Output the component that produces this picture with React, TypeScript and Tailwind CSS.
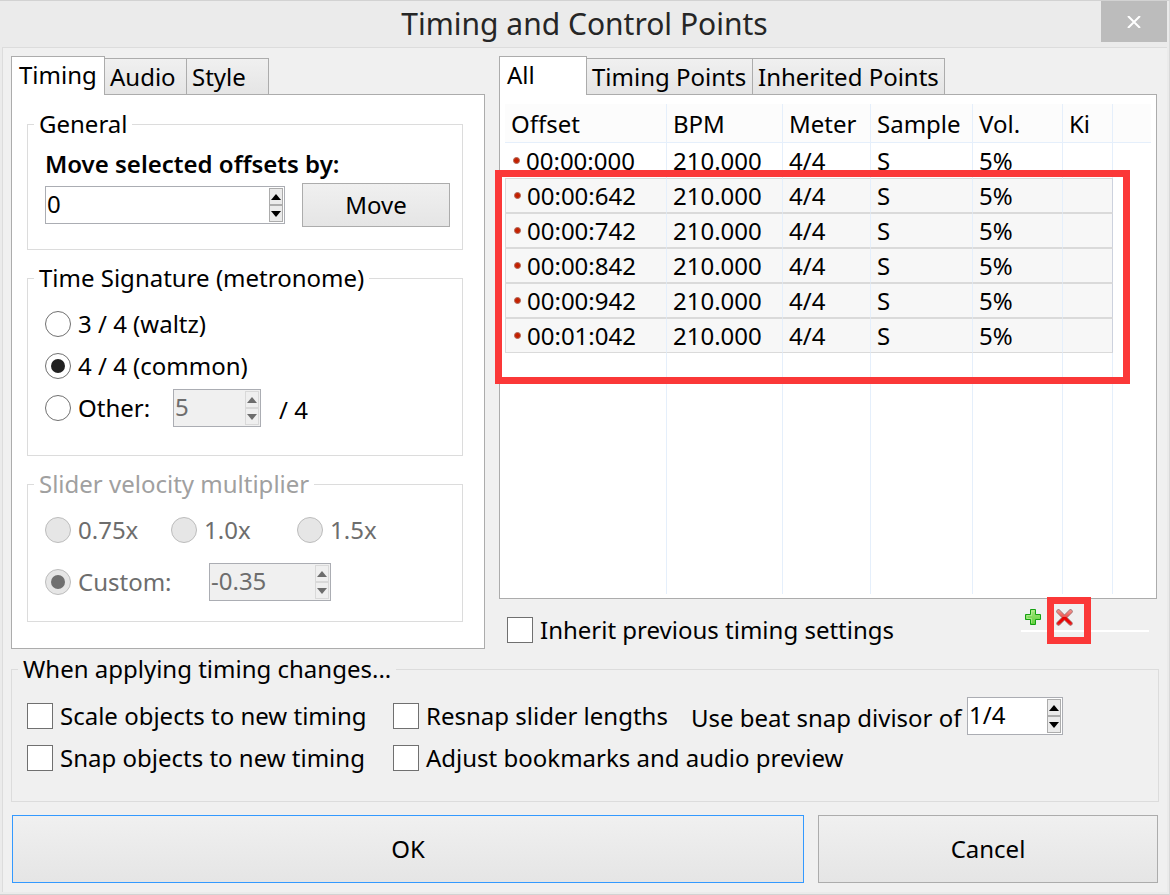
import { useState } from "react";
import type { ReactNode } from "react";
import clsx from "clsx";

type Point = {
  offset: string;
  bpm: string;
  meter: string;
  sample: string;
  volume: string;
  selected: boolean;
};

const offsets = ["00:00:000", "00:00:642", "00:00:742", "00:00:842", "00:00:942", "00:01:042"];

const points: Point[] = offsets.map((offset, i) => ({
  offset,
  bpm: "210.000",
  meter: "4/4",
  sample: "S",
  volume: "5%",
  selected: i > 0,
}));

function Tabs({ names, widths }: { names: string[]; widths: string[] }) {
  const [active, setActive] = useState(0);
  return (
    <div role="tablist" className="relative z-10 -mb-px flex h-[39px] items-end">
      {names.map((name, i) => (
        <button
          key={name}
          role="tab"
          aria-selected={i === active}
          onClick={() => setActive(i)}
          className={clsx(
            "border border-[#acacac] text-left whitespace-nowrap",
            widths[i],
            i === active
              ? "h-[39px] border-b-0 bg-white pb-0.5 pl-[7px]"
              : "-ml-px h-[37px] bg-linear-to-b from-[#f0f0f0] to-[#e5e5e5] pl-[5px]"
          )}
        >
          {name}
        </button>
      ))}
    </div>
  );
}

function Group({
  title,
  className,
  children,
}: {
  title: string;
  className?: string;
  children: ReactNode;
}) {
  return (
    <fieldset className={clsx("min-w-0 border border-[#dcdcdc]", className)}>
      <legend className="ml-[6px] px-[5px] leading-6">{title}</legend>
      {children}
    </fieldset>
  );
}

function Spinner({
  label,
  value,
  className,
  disabled,
}: {
  label: string;
  value: string;
  className: string;
  disabled?: boolean;
}) {
  const button = clsx(
    "flex flex-1 items-center justify-center border",
    disabled ? "border-[#d9d9d9] bg-[#efefef]" : "border-[#acacac] bg-[#ebebeb]"
  );
  return (
    <div
      className={clsx(
        "flex h-[38px] shrink-0 border border-[#abadb3] p-px",
        className,
        disabled ? "bg-[#f0f0f0] text-[#6d6d6d]" : "bg-white text-black"
      )}
    >
      <input
        aria-label={label}
        defaultValue={value}
        disabled={disabled}
        className="min-w-0 flex-1 bg-transparent pb-0.5 outline-none"
      />
      <div className="flex w-[14px] flex-col">
        <button aria-label="Increase" disabled={disabled} className={button}>
          <svg width="10" height="6" viewBox="0 0 10 6" fill="currentColor">
            <path d="M0 6 5 0l5 6z" />
          </svg>
        </button>
        <button aria-label="Decrease" disabled={disabled} className={button}>
          <svg width="10" height="6" viewBox="0 0 10 6" fill="currentColor">
            <path d="M0 0h10L5 6z" />
          </svg>
        </button>
      </div>
    </div>
  );
}

function Radio({
  label,
  name,
  checked,
  disabled,
  className,
}: {
  label: string;
  name: string;
  checked?: boolean;
  disabled?: boolean;
  className?: string;
}) {
  return (
    <label className={clsx("flex items-center gap-[7px] whitespace-nowrap", className)}>
      <input
        type="radio"
        name={name}
        defaultChecked={checked}
        disabled={disabled}
        className="grid size-[26px] shrink-0 appearance-none place-items-center rounded-full border border-[#707070] bg-white before:size-[14px] before:rounded-full checked:before:bg-[#212121] disabled:border-[#bcbcbc] disabled:bg-[#e6e6e6] disabled:checked:before:bg-[#707070]"
      />
      {label}
    </label>
  );
}

function Checkbox({ label, className }: { label: string; className?: string }) {
  return (
    <label className={clsx("flex items-center gap-[7px] whitespace-nowrap", className)}>
      <input
        type="checkbox"
        className="size-[26px] shrink-0 appearance-none border border-[#707070] bg-white checked:bg-[#707070]"
      />
      {label}
    </label>
  );
}

function AddIcon() {
  return (
    <svg width="16" height="16" viewBox="0 0 16 16">
      <defs>
        <linearGradient id="add" x1="0" y1="0" x2="0" y2="1">
          <stop offset="0" stopColor="#a5e67c" />
          <stop offset="1" stopColor="#5fd03b" />
        </linearGradient>
      </defs>
      <path
        d="M5.5.5h5v5h5v5h-5v5h-5v-5h-5v-5h5z"
        fill="url(#add)"
        stroke="#15a012"
        strokeLinejoin="round"
      />
      <path d="M6.5 14V9.500H2v-3h4.500V2h3" fill="none" stroke="#c2f0a4" strokeOpacity=".6" />
    </svg>
  );
}

function DeleteIcon() {
  return (
    <svg width="17" height="17" viewBox="0 0 17 17" strokeLinecap="round">
      <defs>
        <linearGradient id="delete" x1="0" y1="0" x2="0" y2="17" gradientUnits="userSpaceOnUse">
          <stop offset="0" stopColor="#f2a09a" />
          <stop offset=".46" stopColor="#ee5450" />
          <stop offset=".5" stopColor="#e60000" />
          <stop offset=".8" stopColor="#ee0a0a" />
          <stop offset="1" stopColor="#e05050" />
        </linearGradient>
      </defs>
      <path d="M2.500 2.500l12 12M14.500 2.500l-12 12" stroke="#a87878" strokeWidth="4.500" />
      <path d="M2.500 2.500l12 12M14.500 2.500l-12 12" stroke="url(#delete)" strokeWidth="3" />
    </svg>
  );
}

function PointsTable() {
  const line = "border-r border-r-[#e5effb]";
  return (
    <table className="h-full w-full table-fixed border-separate border-spacing-0">
      <colgroup>
        <col className="w-[162px]" />
        <col className="w-[116px]" />
        <col className="w-[88px]" />
        <col className="w-[102px]" />
        <col className="w-[90px]" />
        <col className="w-[50px]" />
        <col />
      </colgroup>
      <thead>
        <tr className="h-[39px] bg-[#fcfcfc] text-left">
          {["Offset", "BPM", "Meter", "Sample", "Vol.", "Ki"].map((name) => (
            <th
              key={name}
              className={clsx("border-b border-b-[#e5effb] pt-0.5 pl-[6px] font-normal", line)}
            >
              {name}
            </th>
          ))}
          <td className="border-b border-b-[#e5effb]" />
        </tr>
      </thead>
      <tbody>
        {points.map((point) => {
          const row = point.selected && "border-y border-y-[#dadada] bg-[#f7f7f7]";
          const cell = clsx("pl-[6px]", line, row);
          return (
            <tr key={point.offset} className="h-[35px]">
              <td className={clsx(cell, point.selected && "border-l border-l-[#dadada]")}>
                <div className="flex items-center gap-[6px] pl-0.5">
                  <span className="size-[7px] rounded-full border border-[#b06a5a] bg-[#c42000]" />
                  {point.offset}
                </div>
              </td>
              <td className={cell}>{point.bpm}</td>
              <td className={cell}>{point.meter}</td>
              <td className={cell}>{point.sample}</td>
              <td className={cell}>{point.volume}</td>
              <td className={clsx(row, point.selected ? "border-r border-r-[#cdd2de]" : line)} />
              <td />
            </tr>
          );
        })}
        <tr>
          {[0, 1, 2, 3, 4, 5].map((i) => (
            <td key={i} className={line} />
          ))}
          <td />
        </tr>
      </tbody>
    </table>
  );
}

export default function App() {
  const bigButton =
    "h-[68px] border bg-linear-to-b from-[#f0f0f0] to-[#e5e5e5] text-center";
  return (
    <div className="flex min-h-screen flex-col border-t border-r border-b border-t-[#d2d2d2] border-r-[#d9d9d9] border-b-[#d2d2d2] bg-[#ebebeb] pr-[2px] pb-[2px] pl-[2px] font-['Noto_Sans','Liberation_Sans',sans-serif] text-[24px] leading-8 text-black">
      <header className="grid h-[46px] grid-cols-[1fr_auto_1fr] items-start">
        <h1 className="col-start-2 text-[30px] leading-[46px] text-[#262626]">
          Timing and Control Points
        </h1>
        <button
          aria-label="Close"
          className="flex h-[41px] w-[66px] items-center justify-center justify-self-end bg-[#bcbcbc] text-white"
        >
          <svg width="14" height="12" viewBox="0 0 14 12" stroke="currentColor" strokeWidth="2">
            <path d="M1 0l12 12M13 0 1 12" />
          </svg>
        </button>
      </header>

      <main className="flex-1 border-t border-l border-[#dcdcdc] bg-[#f0f0f0] px-2 pt-2 pb-2">
        <div className="grid grid-cols-[474fr_658fr] gap-[14px] pr-0.5">
          <section>
            <Tabs names={["Timing", "Audio", "Style"]} widths={["w-[94px]", "w-[83px]", "w-[83px]"]} />
            <div className="flex flex-col gap-4 border border-[#acacac] bg-white pt-[17px] pr-[21px] pb-[26px] pl-[15px]">
              <Group title="General" className="pb-[22px]">
                <div className="pt-4 pl-[17px] leading-6 font-semibold">
                  Move selected offsets by:
                </div>
                <div className="mt-[7px] flex items-center gap-[17px] pl-[17px]">
                  <Spinner label="Move selected offsets by" value="0" className="w-[240px]" />
                  <button className="h-[44px] w-[148px] border border-[#acacac] bg-linear-to-b from-[#f0f0f0] to-[#e5e5e5]">
                    Move
                  </button>
                </div>
              </Group>

              <Group title="Time Signature (metronome)" className="pb-[26px]">
                <div className="pt-[13px] pl-[17px]">
                  <Radio name="signature" label="3 / 4 (waltz)" className="h-[42px]" />
                  <Radio name="signature" label="4 / 4 (common)" checked className="h-[42px]" />
                  <div className="flex h-[42px] items-center">
                    <Radio name="signature" label="Other:" className="w-[128px]" />
                    <Spinner label="Beats per measure" value="5" disabled className="w-[88px]" />
                    <span className="pt-1 pl-[18px]">/ 4</span>
                  </div>
                </div>
              </Group>

              <Group title="Slider velocity multiplier" className="pb-[13px] text-[#a0a0a0]">
                <div className="pt-2 pl-[17px] text-[#6d6d6d]">
                  <div className="flex h-[52px] items-center">
                    <Radio name="velocity" label="0.75x" disabled className="w-[126px]" />
                    <Radio name="velocity" label="1.0x" disabled className="w-[126px]" />
                    <Radio name="velocity" label="1.5x" disabled />
                  </div>
                  <div className="flex h-[52px] items-center">
                    <Radio name="velocity" label="Custom:" checked disabled className="w-[164px]" />
                    <Spinner label="Custom velocity" value="-0.35" disabled className="w-[122px]" />
                  </div>
                </div>
              </Group>
            </div>
          </section>

          <section className="flex flex-col">
            <Tabs
              names={["All", "Timing Points", "Inherited Points"]}
              widths={["w-[88px]", "w-[167px]", "w-[193px]"]}
            />
            <div className="relative h-[505px] border border-[#acacac] bg-white pt-[9px] pr-[5px] pb-1 pl-[5px]">
              <PointsTable />
              <div className="pointer-events-none absolute top-[75px] -left-[5px] h-[214px] w-[635px] border-7 border-[#fb3838]" />
            </div>
            <div className="flex flex-1 items-start justify-between pr-2 pl-2">
              <Checkbox label="Inherit previous timing settings" className="pt-[15px]" />
              <div className="flex h-[33px] w-[128px] items-start gap-[15px] border-b-2 border-white pt-[10px] pl-1">
                <button aria-label="Add timing point">
                  <AddIcon />
                </button>
                <button aria-label="Delete timing point" className="relative">
                  <DeleteIcon />
                  <span className="pointer-events-none absolute -top-3 -left-[9px] h-[47px] w-[44px] border-7 border-[#fb3838]" />
                </button>
              </div>
            </div>
          </section>
        </div>

        <Group title="When applying timing changes..." className="mt-2 pb-[22px]">
          <div className="grid grid-cols-[366px_298px_1fr] pt-[14px] pl-[15px]">
            <Checkbox label="Scale objects to new timing" className="h-[42px]" />
            <Checkbox label="Resnap slider lengths" className="h-[42px]" />
            <div className="flex h-[42px] items-center whitespace-nowrap">
              <span className="w-[276px] pt-1">Use beat snap divisor of</span>
              <Spinner label="Beat snap divisor" value="1/4" className="w-[96px]" />
            </div>
            <Checkbox label="Snap objects to new timing" className="h-[42px]" />
            <Checkbox label="Adjust bookmarks and audio preview" className="col-span-2 h-[42px]" />
          </div>
        </Group>

        <div className="mt-[13px] grid grid-cols-[792fr_340fr] gap-[14px] px-px">
          <button className={clsx(bigButton, "border-[#3399ff]")}>OK</button>
          <button className={clsx(bigButton, "border-[#acacac]")}>Cancel</button>
        </div>
      </main>
    </div>
  );
}
